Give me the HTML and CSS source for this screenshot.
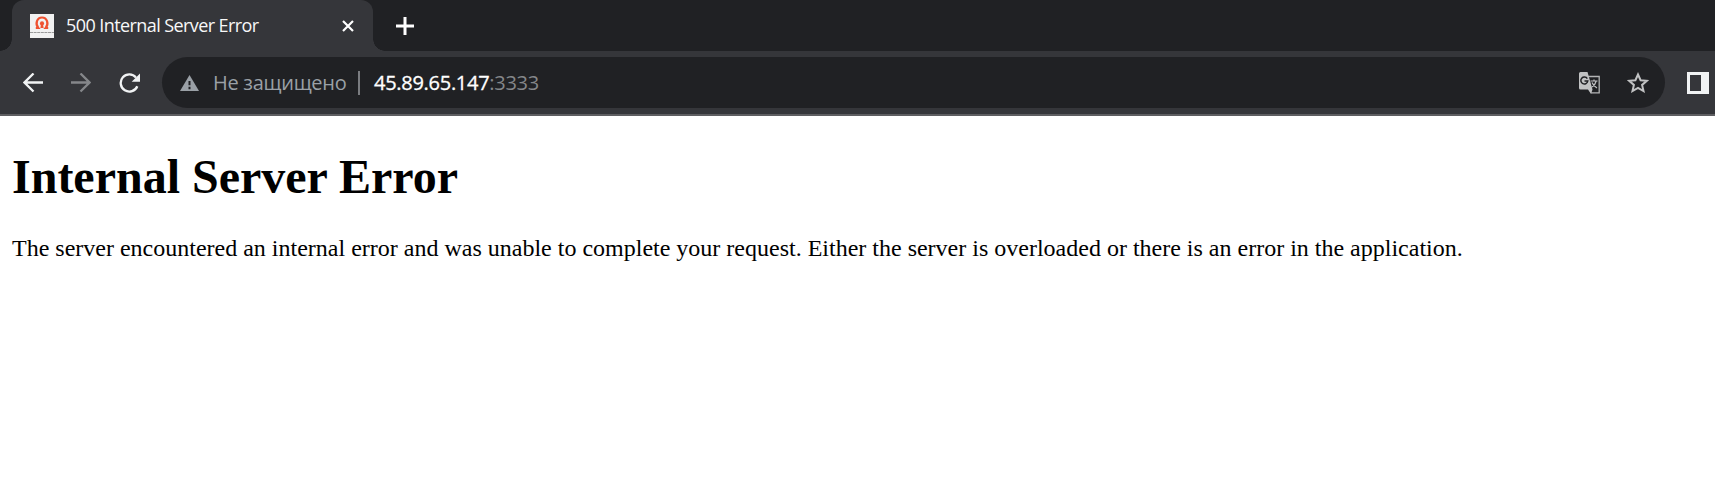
FILE: index.html
```html
<!DOCTYPE html>
<html lang="ru">
<head>
<meta charset="utf-8">
<title>500 Internal Server Error</title>
<link rel="stylesheet" href="styles.css">
</head>
<body>
<header class="browser">
  <div class="tab-strip">
    <div class="tab">
      <svg class="favicon" width="24" height="24" viewBox="0 0 24 24"><path d="M0 0h24v24H0z" fill="#f1f1f1"/><path d="M5.800 14H8.300C4.800 9.800 7 3.500 12 3.500S19.200 9.800 15.700 14h2.500" fill="none" stroke="#ef5130" stroke-width="2.200"/><circle cx="12" cy="9.400" r="2.100" fill="#ef5130"/><path d="M11 10h2l.6 4h-3.200z" fill="#ef5130"/><path d="M0 18.500h24" stroke="#999" stroke-width="1" stroke-dasharray="3 .6"/></svg>
      <span class="tab-title">500 Internal Server Error</span>
      <svg class="close" width="12" height="12" viewBox="0 0 12 12"><path d="M1 1l10 10M11 1L1 11" stroke="#fff" stroke-width="2.200"/></svg>
    </div>
    <svg class="new-tab" width="18" height="18" viewBox="0 0 18 18"><path d="M9 0v18M0 9h18" stroke="#fff" stroke-width="3"/></svg>
  </div>
  <div class="toolbar">
    <nav class="nav">
      <svg width="20" height="20" viewBox="0 0 20 20"><path d="M20 9.500H2M10.500.5l-9 9 9 9" fill="none" stroke="#f1f3f4" stroke-width="2.300"/></svg>
      <svg width="20" height="20" viewBox="0 0 20 20"><path d="M0 9.500h18M9.500.5l9 9-9 9" fill="none" stroke="#85878a" stroke-width="2.300"/></svg>
      <svg width="22" height="20" viewBox="0 0 22 20"><path d="M18.300 13.200A8.600 8.600 0 1 1 17 4.600" fill="none" stroke="#f1f3f4" stroke-width="2.300"/><path d="M21 .5v8.300h-8.300z" fill="#f1f3f4"/></svg>
    </nav>
    <div class="omnibox">
      <svg class="warning" width="19" height="16" viewBox="0 0 19 16"><path d="M9.500 0L19 16H0z" fill="#9aa0a6"/><path d="M9.500 6v4.300M9.500 11.800v2.400" stroke="#202124" stroke-width="2"/></svg>
      <span class="status">Не защищено</span>
      <span class="divider"></span>
      <span class="url"><span class="host">45.89.65.147</span><span class="port">:3333</span></span>
      <svg class="translate" width="22" height="22" viewBox="0 0 22 22"><path d="M9 4.500h11.200v16.300H12" fill="none" stroke="#b3b4b5" stroke-width="1.300"/><path d="M1.500 0h7l5 17.500H1.500Q0 17.500 0 16V1.500Q0 0 1.500 0zM9 17.500h4.500L12 22z" fill="#c1c2c3"/><path d="M8.300 6.600A3.500 3.500 0 1 0 8.800 9H5.500" fill="none" stroke="#202124" stroke-width="1.500"/><path d="M11.500 9h7M15 7.500V9M17.200 9q-1 4-4.200 6M13 10.500q1.500 3.500 5 5.500" fill="none" stroke="#c1c2c3" stroke-width="1.200"/></svg>
      <svg class="star" width="22" height="21" viewBox="0 0 22 21"><path d="M11 2.500l2.600 5.700 6.200.6-4.700 4.100 1.400 6.100-5.500-3.200L5.500 19l1.400-6.100-4.700-4.100 6.200-.6z" fill="none" stroke="#c1c2c3" stroke-width="2"/></svg>
    </div>
    <svg class="panel" width="22" height="22" viewBox="0 0 22 22"><path fill="#f1f3f4" fill-rule="evenodd" d="M0 0h22v22H0zM3 3v16h11V3z"/></svg>
  </div>
</header>
<main class="page">
  <h1>Internal Server Error</h1>
  <p>The server encountered an internal error and was unable to complete your request. Either the server is overloaded or there is an error in the application.</p>
</main>
</body>
</html>
```
FILE: styles.css
```css
body { margin: 0; background: #fff; color: #000; overflow: hidden; }
svg { display: block; flex: none; }
.browser { font-family: "Open Sans", "Noto Sans", sans-serif; background: #35363a; border-bottom: 2px solid #5e5e61; }
.tab-strip { display: flex; align-items: center; height: 51px; background: #202124; padding-left: 12px; }
.tab { position: relative; display: flex; align-items: center; box-sizing: border-box; width: 361px; height: 51px; padding: 0 19px 0 18px; background: #35363a; border-radius: 12px 12px 0 0; }
.tab::before, .tab::after { content: ""; position: absolute; bottom: 0; width: 12px; height: 12px; }
.tab::before { left: -12px; background: radial-gradient(circle at 0 0, #202124 11.5px, #35363a 12px); }
.tab::after { right: -12px; background: radial-gradient(circle at 100% 0, #202124 11.5px, #35363a 12px); }
.favicon { margin-top: 1px; }
.tab-title { flex: 1; margin: 0 0 2px 12px; color: #f8f8f8; font-size: 18px; line-height: 24px; letter-spacing: -0.58px; white-space: nowrap; }
.new-tab { margin-left: 23px; }
.toolbar { display: flex; align-items: center; box-sizing: border-box; height: 63px; padding: 0 6px 0 23px; }
.nav { display: flex; gap: 28px; width: 139px; }
.omnibox { display: flex; align-items: center; box-sizing: border-box; width: 1503px; height: 51px; padding: 0 16px 0 18px; border-radius: 26px; background: #202124; font-size: 20px; white-space: nowrap; }
.status { width: 134px; margin-left: 14px; color: #9aa0a6; letter-spacing: -0.28px; }
.divider { width: 2px; height: 24px; margin: 0 14px 0 11px; background: #7a7c80; }
.url { flex: 1; letter-spacing: -0.28px; }
.host { color: #fff; -webkit-text-stroke: 0.3px #fff; }
.port { color: #85878a; }
.translate { margin-top: 1px; }
.star { margin-left: 26px; }
.panel { margin: 1px 0 0 22px; }
.page { padding: 0 12px; font-family: "Liberation Serif", "Times New Roman", serif; }
h1 { margin: 33px 0 31px; font-size: 48px; line-height: 55px; white-space: nowrap; }
p { margin: 0; font-size: 24px; line-height: 27px; white-space: nowrap; }
```
